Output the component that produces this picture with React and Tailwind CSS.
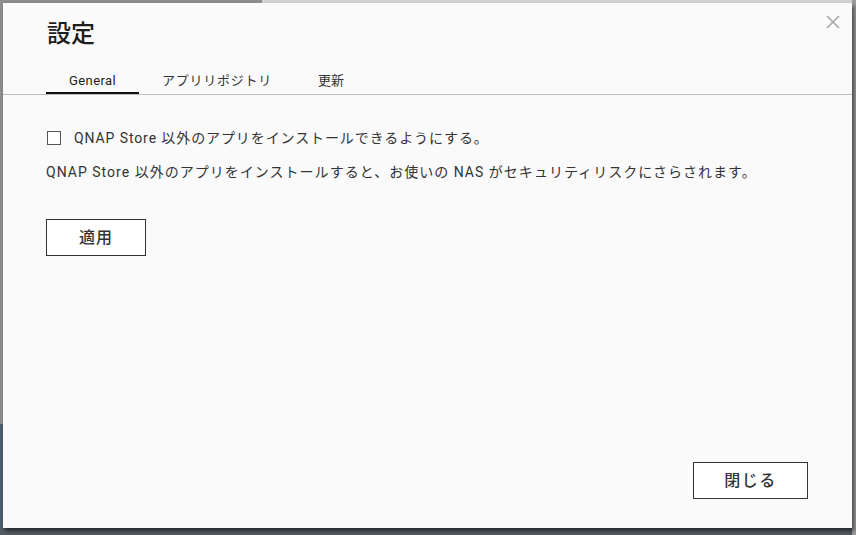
import React from "react";

export default function App() {
  const font = { fontFamily: '"Roboto", "Noto Sans CJK JP", sans-serif' };
  return (
    <div className="relative w-[856px] h-[535px] overflow-hidden bg-[#8e8e8e]" style={font}>
      {/* desktop background behind the window */}
      <div className="absolute left-[262px] top-0 w-[594px] h-[6px] bg-[#d2d2d2]" />
      <div className="absolute left-0 top-[424px] w-[6px] h-[111px] bg-[#4f5f6b]" />
      <div className="absolute left-0 top-[526px] w-[856px] h-[9px] bg-[#525c63]" />
      <div className="absolute left-[852px] top-0 w-[4px] h-[535px] bg-[#9a9a9a]" />

      <div className="relative pl-[3px] pt-[3px]">
        <div className="relative w-[849px] h-[525px] bg-[#fafafa] shadow-[2px_3px_4px_rgba(0,0,0,0.55)] flex flex-col">
          {/* close X */}
          <button className="absolute right-[12px] top-[12px] w-[14px] h-[14px]">
            <svg width="14" height="14" viewBox="0 0 14 14">
              <path d="M1 1 L13 13 M13 1 L1 13" stroke="#a6a6a6" strokeWidth="1.6" fill="none" />
            </svg>
          </button>

          <h1 className="pt-[13px] pl-[44px] text-[24px] leading-[36px] font-medium text-[#1e1e1e]">設定</h1>

          <div className="mt-[19px] flex px-[43px] border-b border-[#bdbdbd]">
            <div className="px-[23px] pb-[1px] border-b-2 border-[#111] text-[13px] leading-[20px] text-[#222] tracking-[0.4px]">General</div>
            <div className="px-[23px] pb-[1px] border-b-2 border-transparent text-[13px] leading-[20px] text-[#333] tracking-[0.75px]">アプリリポジトリ</div>
            <div className="pl-[23px] pr-[23px] pb-[1px] border-b-2 border-transparent text-[13px] leading-[20px] text-[#333]">更新</div>
          </div>

          <div className="flex flex-col pl-[43px] flex-1">
            <label className="mt-[33px] flex items-center h-[20px] text-[14px] leading-[20px] text-[#333]">
              <span className="w-[14px] h-[14px] border border-[#555] bg-white ml-[1px]" />
              <span className="ml-[13px] tracking-[0.9px]">QNAP Store 以外のアプリをインストールできるようにする。</span>
            </label>
            <p className="mt-[14px] text-[14px] leading-[20px] text-[#333] tracking-[1.02px]">
              QNAP Store 以外のアプリをインストールすると、お使いの NAS がセキュリティリスクにさらされます。
            </p>
            <div className="mt-[37px]">
              <button className="w-[100px] h-[37px] border border-[#333] bg-white text-[16px] font-medium text-[#333] tracking-[1px]">
                適用
              </button>
            </div>
            <div className="flex-1" />
            <div className="flex justify-end pr-[44px] pb-[29px]">
              <button className="w-[115px] h-[37px] border border-[#333] bg-white text-[16px] font-medium text-[#333] tracking-[1.5px]">
                閉じる
              </button>
            </div>
          </div>
        </div>
      </div>
    </div>
  );
}
